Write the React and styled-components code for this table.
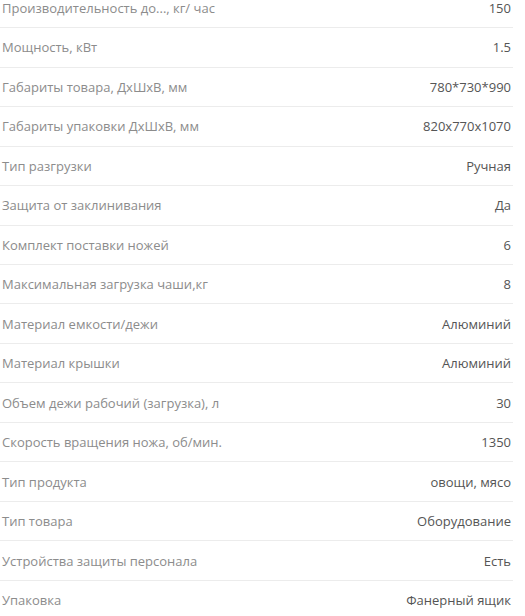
import React from 'react';
import styled, { createGlobalStyle } from 'styled-components';

const GlobalStyle = createGlobalStyle`
    body {
        margin: 0;
        background: #fff;
        font-family: "Open Sans", "Liberation Sans", sans-serif;
    }
`;

const SpecList = styled.div`
    width: 513px;
    margin-top: -11.3px;
`;

const SpecRow = styled.div`
    display: flex;
    justify-content: space-between;
    align-items: center;
    height: 38.48px;
    border-bottom: 1px solid #ececec;
    padding: 0 2px 0 2px;
    font-size: 13px;
`;

const Label = styled.span`
    color: #8c8c8c;
`;

const Value = styled.span`
    color: #555;
`;

const specs = [
    ['Производительность до..., кг/ час', '150'],
    ['Мощность, кВт', '1.5'],
    ['Габариты товара, ДхШхВ, мм', '780*730*990'],
    ['Габариты упаковки ДхШхВ, мм', '820х770х1070'],
    ['Тип разгрузки', 'Ручная'],
    ['Защита от заклинивания', 'Да'],
    ['Комплект поставки ножей', '6'],
    ['Максимальная загрузка чаши,кг', '8'],
    ['Материал емкости/дежи', 'Алюминий'],
    ['Материал крышки', 'Алюминий'],
    ['Объем дежи рабочий (загрузка), л', '30'],
    ['Скорость вращения ножа, об/мин.', '1350'],
    ['Тип продукта', 'овощи, мясо'],
    ['Тип товара', 'Оборудование'],
    ['Устройства защиты персонала', 'Есть'],
    ['Упаковка', 'Фанерный ящик'],
];

export default function App() {
    return (
        <>
            <GlobalStyle />
            <SpecList>
                {specs.map(([label, value]) => (
                    <SpecRow key={label}>
                        <Label>{label}</Label>
                        <Value>{value}</Value>
                    </SpecRow>
                ))}
            </SpecList>
        </>
    );
}
